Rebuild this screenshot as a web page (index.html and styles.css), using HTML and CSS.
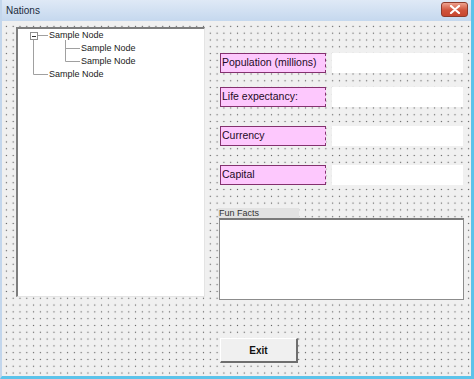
FILE: index.html
```html
<!DOCTYPE html>
<html lang="en">
<head>
    <meta charset="UTF-8">
    <title>Nations</title>
    <link rel="stylesheet" href="styles.css">
</head>
<body>
    <div class="window">
        <div class="title-bar">
            <span class="title">Nations</span>
            <div class="close-btn">
                <svg width="12" height="9" viewBox="0 0 12 9"><path d="M2 1 L10 8 M10 1 L2 8" stroke="#fff" stroke-width="2.2" stroke-linecap="round"/></svg>
            </div>
        </div>

        <div class="form">
            <div class="main">
                <div class="tree">
                    <svg class="tree-lines" width="70" height="50" viewBox="0 0 70 50">
                        <g stroke="#a0a0a0" stroke-width="1" fill="none">
                            <path d="M19 6.5 H30"/>
                            <path d="M15.5 11 V45.5 H30"/>
                            <path d="M47.5 11 V32.5 H62"/>
                            <path d="M47.5 19.5 H62"/>
                        </g>
                        <rect x="12.5" y="3.5" width="7" height="7" fill="#fff" stroke="#8f8f8f"/>
                        <path d="M14 7.5 H18" stroke="#333" stroke-width="1"/>
                    </svg>
                    <div class="node">Sample Node</div>
                    <div class="node child">Sample Node</div>
                    <div class="node child">Sample Node</div>
                    <div class="node">Sample Node</div>
                </div>

                <div class="fields">
                    <div class="field first">
                        <div class="label">Population (millions)</div>
                        <div class="textbox"></div>
                    </div>
                    <div class="field">
                        <div class="label">Life expectancy:</div>
                        <div class="textbox"></div>
                    </div>
                    <div class="field wide">
                        <div class="label">Currency</div>
                        <div class="textbox"></div>
                    </div>
                    <div class="field wide">
                        <div class="label">Capital</div>
                        <div class="textbox"></div>
                    </div>
                    <div class="fun-label">Fun Facts</div>
                    <div class="fun-box"></div>
                </div>
            </div>

            <button class="exit-btn">Exit</button>
        </div>
    </div>
</body>
</html>
```

FILE: styles.css
```css
body {
    margin: 0;
    font-family: "Liberation Sans", Arial, sans-serif;
    background: #fff;
}
.window {
    width: 474px;
    height: 379px;
    box-sizing: border-box;
    border-left: 2px solid #c3d6ec;
    border-right: 3px solid #5cc3ea;
    border-bottom: 3px solid #5cc3ea;
    display: flex;
    flex-direction: column;
}
.title-bar {
    height: 21px;
    flex-shrink: 0;
    display: flex;
    align-items: center;
    justify-content: space-between;
    background: linear-gradient(#dfe9f6, #c5d8ee);
    padding: 0 3px 0 4px;
}
.title {
    font-size: 10px;
    color: #1b2a3c;
}
.close-btn {
    width: 25px;
    height: 13px;
    margin-top: -2px;
    border: 1px solid #8e3b2c;
    border-radius: 3px;
    background: linear-gradient(#eea28f, #d0533b 55%, #c8462f);
    display: flex;
    align-items: center;
    justify-content: center;
}
.form {
    flex: 1;
    background-color: #f0f0f0;
    background-image: radial-gradient(circle, #5e5e5e 0.7px, transparent 1px);
    background-size: 6.8px 6.8px;
    background-position: 1px 2px;
    padding: 6px 0 0 14px;
}
.main {
    display: flex;
}
.tree {
    position: relative;
    width: 189px;
    height: 270px;
    box-sizing: border-box;
    background: #fff;
    border-top: 2px solid #7e7e7e;
    border-left: 2px solid #7e7e7e;
    border-right: 1px solid #e4e4e4;
    border-bottom: 1px solid #e4e4e4;
}
.tree-lines {
    position: absolute;
    left: 0;
    top: 0;
}
.node {
    height: 13px;
    line-height: 13px;
    font-size: 9px;
    color: #222;
    padding-left: 31px;
}
.node.child {
    padding-left: 63px;
}
.fields {
    margin-left: 13px;
    padding-top: 26px;
    width: 246px;
}
.field {
    display: flex;
    height: 20px;
    margin-top: 14px;
    padding-left: 2px;
}
.field.first {
    margin-top: 0;
}
.field.wide {
    margin-top: 19px;
}
.label {
    width: 106px;
    box-sizing: border-box;
    background: #fdc8fd;
    border: 1px solid #84306f;
    border-right-style: dashed;
    font-size: 10.5px;
    color: #1e0a26;
    line-height: 17px;
    padding-left: 1px;
}
.textbox {
    width: 131px;
    margin-left: 6px;
    background: #fff;
}
.fun-label {
    margin-top: 23px;
    width: 80px;
    height: 10px;
    background: #e2e2e2;
    font-size: 9px;
    line-height: 10px;
    color: #333;
    padding-left: 1px;
}
.fun-box {
    width: 245px;
    height: 82px;
    box-sizing: border-box;
    margin-left: 1px;
    background: #fff;
    border: 1px solid #8c8c8c;
    border-top: 2px solid #7a7a7a;
}
.exit-btn {
    display: block;
    margin: 38px 0 0 204px;
    width: 78px;
    height: 25px;
    border: none;
    border-top: 1px solid #fff;
    border-left: 1px solid #fff;
    border-right: 2px solid #6e6e6e;
    border-bottom: 2px solid #6e6e6e;
    background: #f0f0f0;
    font-family: "Liberation Sans", Arial, sans-serif;
    font-weight: bold;
    font-size: 10px;
    color: #111;
    padding: 0;
}
```
